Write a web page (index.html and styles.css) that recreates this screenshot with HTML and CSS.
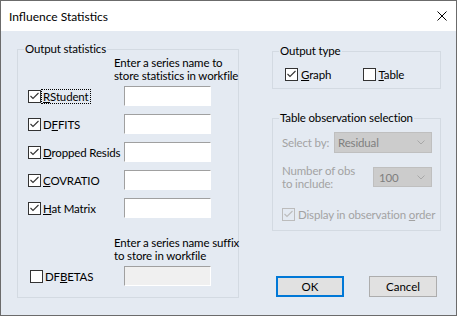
FILE: index.html
```html
<!DOCTYPE html>
<html lang="en">
<head>
  <meta charset="UTF-8">
  <title>Influence Statistics</title>
  <link rel="stylesheet" href="styles.css">
</head>
<body>

<div class="dialog">
  <div class="titlebar">
    <span class="title">Influence Statistics</span>
    <svg class="close" width="10" height="10" viewBox="0 0 10 10">
      <path d="M0.5 0.5 L9.5 9.5 M9.5 0.5 L0.5 9.5" stroke="#000" stroke-width="1" fill="none"/>
    </svg>
  </div>

  <div class="content">
    <fieldset class="group stats">
      <legend>Output statistics</legend>
      <div class="hint">Enter a series name to<br>store statistics in workfile</div>

      <div class="stat-row">
        <label class="check"><span class="box"><svg width="11" height="11" viewBox="0 0 11 11"><polyline points="1.5,5 4,7.5 9.5,2" /></svg></span><span class="focus"><u>R</u>Student</span></label>
        <input class="edit" type="text">
      </div>
      <div class="stat-row">
        <label class="check"><span class="box"><svg width="11" height="11" viewBox="0 0 11 11"><polyline points="1.5,5 4,7.5 9.5,2" /></svg></span><span>D<u>F</u>FITS</span></label>
        <input class="edit" type="text">
      </div>
      <div class="stat-row">
        <label class="check"><span class="box"><svg width="11" height="11" viewBox="0 0 11 11"><polyline points="1.5,5 4,7.5 9.5,2" /></svg></span><span><u>D</u>ropped Resids</span></label>
        <input class="edit" type="text">
      </div>
      <div class="stat-row">
        <label class="check"><span class="box"><svg width="11" height="11" viewBox="0 0 11 11"><polyline points="1.5,5 4,7.5 9.5,2" /></svg></span><span><u>C</u>OVRATIO</span></label>
        <input class="edit" type="text">
      </div>
      <div class="stat-row">
        <label class="check"><span class="box"><svg width="11" height="11" viewBox="0 0 11 11"><polyline points="1.5,5 4,7.5 9.5,2" /></svg></span><span><u>H</u>at Matrix</span></label>
        <input class="edit" type="text">
      </div>

      <div class="hint suffix">Enter a series name suffix<br>to store in workfile</div>
      <div class="stat-row beta">
        <label class="check"><span class="box"></span><span>DF<u>B</u>ETAS</span></label>
        <input class="edit off" type="text" disabled>
      </div>
    </fieldset>

    <div class="side">
      <fieldset class="group type">
        <legend>Output type</legend>
        <div class="type-row">
          <label class="check"><span class="box"><svg width="11" height="11" viewBox="0 0 11 11"><polyline points="1.5,5 4,7.5 9.5,2" /></svg></span><span><u>G</u>raph</span></label>
          <label class="check"><span class="box"></span><span><u>T</u>able</span></label>
        </div>
      </fieldset>

      <fieldset class="group obs">
        <legend>Table observation selection</legend>
        <div class="obs-row">
          <span class="dim">Select by:</span>
          <div class="select sel-by"><span>Residual</span><svg width="8" height="5" viewBox="0 0 8 5"><polyline points="0.5,0.5 4,4 7.5,0.5" /></svg></div>
        </div>
        <div class="obs-row num-row">
          <span class="dim">Number of obs<br>to include:</span>
          <div class="select sel-num"><span>100</span><svg width="8" height="5" viewBox="0 0 8 5"><polyline points="0.5,0.5 4,4 7.5,0.5" /></svg></div>
        </div>
        <label class="check order-row dim"><span class="box off"><svg width="11" height="11" viewBox="0 0 11 11"><polyline points="1.5,5 4,7.5 9.5,2" /></svg></span><span>Display in observation <u>o</u>rder</span></label>
      </fieldset>

      <div class="buttons">
        <button class="btn default">OK</button>
        <button class="btn">Cancel</button>
      </div>
    </div>
  </div>
</div>

</body>
</html>
```

FILE: styles.css
```css
body {
  margin: 0;
  font-family: 'Segoe UI', Lato, sans-serif;
  font-size: 11.5px;
  letter-spacing: -0.15px;
  color: #000;
  white-space: nowrap;
}

.dialog {
  width: 457px;
  height: 316px;
  box-sizing: border-box;
  border: 1px solid #6b6b6b;
  background-color: #e4eaf2;
  display: flex;
  flex-direction: column;
  overflow: hidden;
}

.titlebar {
  flex: none;
  height: 30px;
  background-color: #fff;
  display: flex;
  align-items: center;
  justify-content: space-between;
  padding: 0 9px 0 8px;
}

.title {
  font-size: 12px;
  letter-spacing: 0;
}

.content {
  display: flex;
  gap: 33px;
  padding-left: 16px;
}

/* group boxes */
.group {
  margin: 0;
  padding: 0;
  min-width: 0;
  border: 1px solid #d3dae2;
  box-sizing: border-box;
}

legend {
  padding: 0 1px;
  line-height: 14px;
}

.stats {
  flex: none;
  width: 222px;
  margin-top: 11px;
  padding: 0 0 7px 10px;
}

.stats legend {
  margin-left: -4px;
}

.hint {
  margin-left: 86px;
  line-height: 13px;
}

.hint.suffix {
  margin-top: 14px;
}

.stat-row {
  display: flex;
  align-items: center;
  height: 28px;
}

.check {
  display: flex;
  align-items: center;
  gap: 2px;
  width: 96px;
}

.stat-row.beta {
  padding-left: 2px;
}

.stat-row.beta .check {
  width: 94px;
}

.focus {
  border: 1px dotted #000;
  margin: 0 -2px;
  padding: 0 1px;
  line-height: 13px;
}

.box {
  flex: none;
  width: 13px;
  height: 13px;
  box-sizing: border-box;
  border: 1px solid #333;
  background-color: #fff;
  display: flex;
}

.box polyline {
  fill: none;
  stroke: #333;
  stroke-width: 1.1;
}

.box.off {
  border-color: #bcbcbc;
  background-color: transparent;
}

.box.off polyline {
  stroke: #bcbcbc;
}

.edit {
  flex: none;
  width: 87px;
  height: 20px;
  box-sizing: border-box;
  margin: 0;
  padding: 0;
  border: 1px solid;
  border-color: #a0a0a0 #fff #fff #a0a0a0;
  background-color: #fff;
}

.edit.off {
  background-color: #f0f0f0;
}

/* right column */
.side {
  flex: none;
  width: 169px;
  margin-top: 13px;
  display: flex;
  flex-direction: column;
}

.type {
  padding: 8px 0 6px 12px;
}

.type legend {
  margin-left: -6px;
}

.type-row {
  display: flex;
  height: 16px;
}

.type-row .check {
  width: 79px;
  gap: 3px;
}

.obs {
  margin-top: 22px;
  padding: 7px 8px 8px 9px;
}

.obs legend {
  margin-left: -3px;
}

.obs-row {
  display: flex;
  align-items: center;
  justify-content: space-between;
  line-height: 13px;
}

.num-row {
  margin-top: 11px;
}

.dim {
  color: #a3a3a3;
}

.select {
  flex: none;
  height: 21px;
  box-sizing: border-box;
  border: 1px solid #bfbfbf;
  background-color: #cccccc;
  color: #7f7f7f;
  display: flex;
  align-items: center;
  justify-content: space-between;
  padding: 0 6px 0 3px;
}

.select polyline {
  fill: none;
  stroke: #a8a8a8;
  stroke-width: 1;
}

.sel-by {
  width: 98px;
}

.sel-num {
  width: 59px;
  height: 20px;
  padding-left: 5px;
}

.order-row {
  width: auto;
  height: 16px;
  margin-top: 16px;
  gap: 3px;
}

.buttons {
  margin-top: 45px;
  display: flex;
  justify-content: space-between;
  padding: 0 4px;
}

.btn {
  width: 68px;
  height: 21px;
  box-sizing: border-box;
  margin: 0;
  padding: 0;
  font: inherit;
  color: #000;
  background-color: #e1e1e1;
  border: 1px solid #adadad;
}

.btn.default {
  border: 2px solid #0078d7;
}
```
